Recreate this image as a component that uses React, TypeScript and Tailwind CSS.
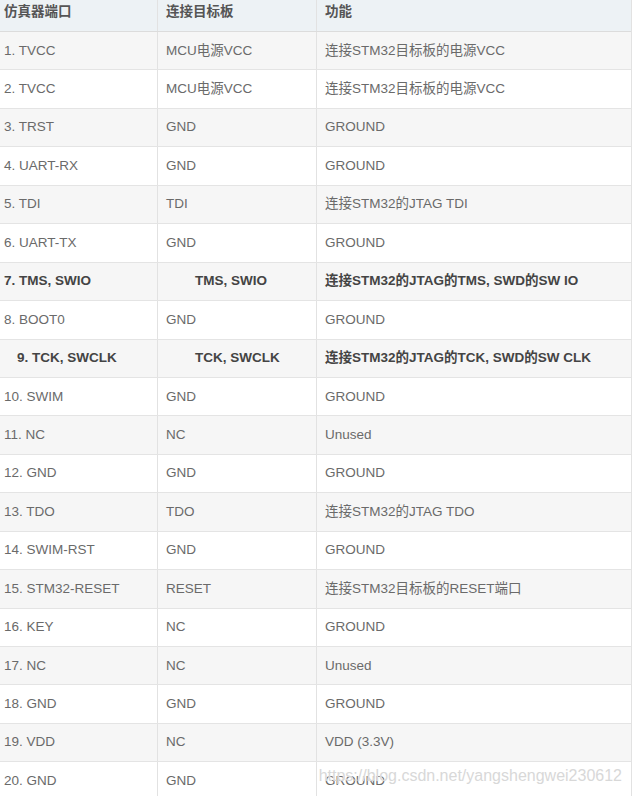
const rows: { a: string; b: string; c: string; bold?: boolean; pa?: string }[] = [
  { a: '1. TVCC', b: 'MCU电源VCC', c: '连接STM32目标板的电源VCC' },
  { a: '2. TVCC', b: 'MCU电源VCC', c: '连接STM32目标板的电源VCC' },
  { a: '3. TRST', b: 'GND', c: 'GROUND' },
  { a: '4. UART-RX', b: 'GND', c: 'GROUND' },
  { a: '5. TDI', b: 'TDI', c: '连接STM32的JTAG TDI' },
  { a: '6. UART-TX', b: 'GND', c: 'GROUND' },
  { a: '7. TMS, SWIO', b: 'TMS, SWIO', c: '连接STM32的JTAG的TMS, SWD的SW IO', bold: true },
  { a: '8. BOOT0', b: 'GND', c: 'GROUND' },
  { a: '9. TCK, SWCLK', b: 'TCK, SWCLK', c: '连接STM32的JTAG的TCK, SWD的SW CLK', bold: true, pa: 'pl-[17px]' },
  { a: '10. SWIM', b: 'GND', c: 'GROUND' },
  { a: '11. NC', b: 'NC', c: 'Unused' },
  { a: '12. GND', b: 'GND', c: 'GROUND' },
  { a: '13. TDO', b: 'TDO', c: '连接STM32的JTAG TDO' },
  { a: '14. SWIM-RST', b: 'GND', c: 'GROUND' },
  { a: '15. STM32-RESET', b: 'RESET', c: '连接STM32目标板的RESET端口' },
  { a: '16. KEY', b: 'NC', c: 'GROUND' },
  { a: '17. NC', b: 'NC', c: 'Unused' },
  { a: '18. GND', b: 'GND', c: 'GROUND' },
  { a: '19. VDD', b: 'NC', c: 'VDD (3.3V)' },
  { a: '20. GND', b: 'GND', c: 'GROUND' },
]

export default function App() {
  return (
    <div
      className="relative w-[632px] h-[796px] overflow-hidden bg-white text-[13.5px] text-[#6a6a6a]"
      style={{ fontFamily: '"Liberation Sans", Arial, "Noto Sans CJK SC", sans-serif' }}
    >
      <div className="border-r border-[#e2e2e2]">
        {/* header */}
        <div className="flex h-[32px] bg-[#edf2f5] font-bold text-[#555] border-b border-[#dcdcdc]">
          <div className="w-[158px] flex items-center pl-[4px] pb-[6px] border-r border-[#e2e2e2]">仿真器端口</div>
          <div className="w-[159px] flex items-center pl-[8px] pb-[6px] border-r border-[#e2e2e2]">连接目标板</div>
          <div className="flex-1 flex items-center pl-[8px] pb-[6px]">功能</div>
        </div>

        {rows.map((r, i) => (
          <div
            key={i}
            className={`flex h-[38.45px] border-b border-[#e4e4e4] ${i % 2 === 0 ? 'bg-[#f6f6f6]' : 'bg-white'} ${r.bold ? 'font-bold text-[#444]' : ''}`}
          >
            <div className={`w-[158px] flex items-center whitespace-nowrap border-r border-[#e2e2e2] ${r.pa ?? 'pl-[4px]'}`}>
              {r.a}
            </div>
            <div className={`w-[159px] flex items-center whitespace-nowrap border-r border-[#e2e2e2] ${r.bold ? 'pl-[37px]' : 'pl-[8px]'}`}>
              {r.b}
            </div>
            <div className="flex-1 flex items-center whitespace-nowrap pl-[8px]">{r.c}</div>
          </div>
        ))}
      </div>

      {/* watermark */}
      <div className="absolute right-[10px] bottom-[8px] text-[16px] text-[#d8d8d8] [text-shadow:0_0_1px_#fff]">
        https://blog.csdn.net/yangshengwei230612
      </div>
    </div>
  )
}
